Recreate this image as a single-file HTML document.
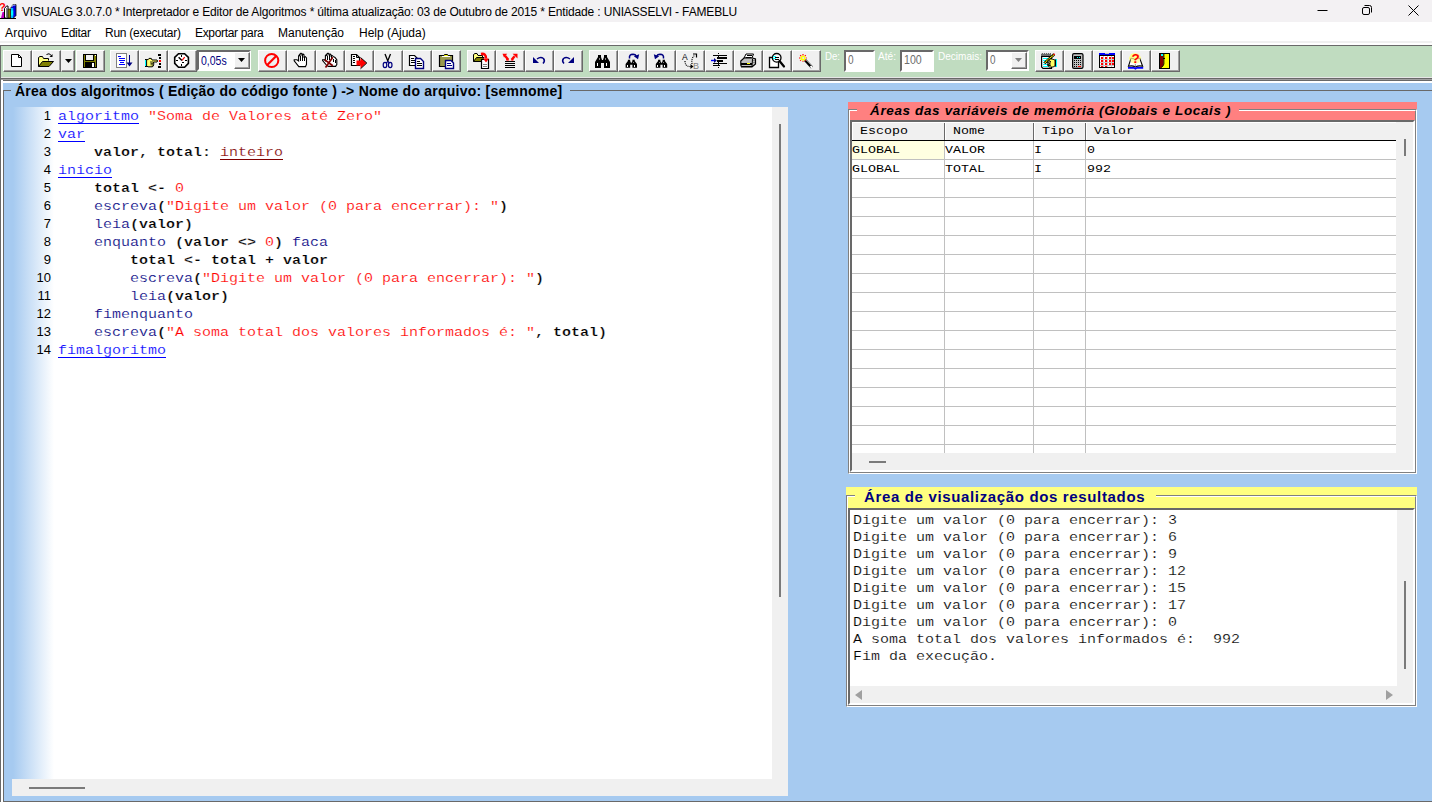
<!DOCTYPE html>
<html lang="pt-BR">
<head>
<meta charset="utf-8">
<title>VISUALG 3.0.7.0</title>
<style>
*{box-sizing:border-box;margin:0;padding:0}
html,body{width:1432px;height:802px;overflow:hidden;background:#a6caf0}
body{position:relative;font-family:"Liberation Sans",sans-serif;font-size:12px;color:#000}
.abs{position:absolute}
.t{position:absolute;white-space:pre;line-height:1}
/* title bar */
#titlebar{left:0;top:0;width:1432px;height:22px;background:#f3f1f3}
#menubar{left:0;top:22px;width:1432px;height:19px;background:#fff}
#menugap{left:0;top:41px;width:1432px;height:4px;background:#fff;border-top:2px solid #f0f0f0}
#toolbar{left:0;top:45px;width:1432px;height:32px;background:#c0dcc0;border-top:1px solid #696969;border-left:1px solid #696969}
#tbline{left:0;top:77px;width:1432px;height:4px;background:linear-gradient(#e6e6e6 0 1px,#696969 1px 2px,#a0a0a0 2px 3px,#696969 3px 4px)}
#tbwhite{left:0;top:81px;width:1432px;height:2px;background:#fff}
#main{left:0;top:83px;width:1432px;height:719px;background:#a6caf0;border-left:1px solid #696969}
#mainwhite{left:1px;top:80px;width:2px;height:722px;background:#fff}
.menu{top:27px;font-size:12px;color:#000}
.btn{position:absolute;top:50px;height:22px;width:28px;background:#f0f0f0;border:1px solid;border-color:#fff #696969 #696969 #fff;box-shadow:inset -1px -1px 0 #a0a0a0}
.btn svg{position:absolute;left:5px;top:2px;width:16px;height:16px;overflow:visible}
.btn svg rect{shape-rendering:crispEdges}

.tl{font-size:11.5px;color:#fff}
.inp{top:50px;height:22px;background:#fff;border:2px solid;border-color:#696969 #fff #fff #696969;font-size:12.5px;color:#6d6d6d;line-height:16px;padding-left:2px}
.inp span{display:inline-block;white-space:pre}
/* editor */
#gbline-l{left:3px;top:90px;width:1px;height:712px;background:#696969}
#gbline-t1{left:3px;top:90px;width:8px;height:1px;background:#696969}
#gbline-t2{left:570px;top:90px;width:862px;height:1px;background:#696969}
#gbline-b{left:3px;top:801px;width:1429px;height:1px;background:#696969}
#gbtitle{left:15px;top:84px;font-weight:bold;font-size:14px}
#editor{left:12px;top:107px;width:776px;height:689px;background:#f0f0f0}
#edwhite{left:0;top:0;width:760px;height:672px;background:#fff}
#gutter{left:0;top:0;width:42px;height:672px;background:linear-gradient(to right,#a6caf0 0,#a6caf0 1px,#fff 42px)}
.ln{position:absolute;left:0;width:39px;text-align:right;font-size:13px;line-height:18px;height:18px;color:#000}
.cl{position:absolute;left:46px;margin-top:1px;-webkit-text-stroke:0.2px #fff;font-family:"Liberation Mono",monospace;font-size:15px;line-height:18px;height:18px;white-space:pre;color:#000}
.cl .s,.cl .b,.cl .c,.cl .n,.cl .sy{display:inline-block;transform:scaleY(0.86);transform-origin:0 12.5px}
.k{color:#0000ff;display:inline-block;height:18px;background:linear-gradient(#0000ff,#0000ff) 0 15px/100% 1px no-repeat}
.ty{color:#800000;display:inline-block;height:18px;background:linear-gradient(#800000,#800000) 0 15px/100% 1px no-repeat}
.c{color:#000080}
.s{color:#ff0000}
.b{font-weight:bold;-webkit-text-stroke:0.25px #fff}
.n{color:#ff0000}

#vp{left:848px;top:102px;width:569px;height:372px;background:#ff8080}
#vp .fr{position:absolute;left:0;top:7px;width:569px;height:365px;border:1px solid;border-color:#808080 #fff #fff #808080;}
#vp .fr2{position:absolute;left:1px;top:8px;width:567px;height:363px;border:1px solid;border-color:#fff #808080 #808080 #fff;}
#vptitle{left:9px;top:2px;font-weight:bold;font-style:italic;font-size:13.5px;background:#ff8080;padding:0 8px 0 13px;height:14px;transform-origin:0 0}
#grid{left:2px;top:18px;width:565px;height:352px;background:#f0f0f0;border:2px solid;border-color:#696969 #fff #fff #696969}
#gridin{left:0;top:0;width:544px;height:331px;background:#fff;overflow:hidden}
#ghead{left:0;top:0;width:544px;height:18px;background:#f0f0f0;border-top:1px solid #fff}
#gheadline{left:0;top:18px;width:544px;height:1px;background:#000}
.hc{position:absolute;top:0;height:18px;border-left:1px solid #fff;border-right:1px solid #696969;font-family:"Liberation Mono",monospace;font-size:13.33px;line-height:15px;padding-left:7px;white-space:pre}
.hc span{display:inline-block;transform:scaleY(0.88);transform-origin:0 11px}
.gr{position:absolute;left:0;width:545px;height:1px;background:#c0c0c0}
.gc{position:absolute;top:19px;width:1px;height:312px;background:#c0c0c0}
.gt{position:absolute;transform:scaleY(0.88);transform-origin:0 12.5px;font-family:"Liberation Mono",monospace;font-size:13.33px;line-height:18px;white-space:pre}
#rp{left:846px;top:487px;width:571px;height:220px;background:#ffff80}
#rp .fr{position:absolute;left:0;top:8px;width:571px;height:212px;border:1px solid;border-color:#808080 #fff #fff #808080;}
#rp .fr2{position:absolute;left:1px;top:9px;width:569px;height:210px;border:1px solid;border-color:#fff #808080 #808080 #fff;}
#rptitle{left:9px;top:2px;font-weight:bold;font-size:15px;color:#000080;background:#ffff80;padding:0 11px 0 9px;height:18px;transform-origin:0 0}
#out{left:2px;top:21px;width:567px;height:197px;background:#f0f0f0;border:2px solid;border-color:#696969 #fff #fff #696969}
#outin{left:0;top:0;width:547px;height:176px;background:#fff}
.ol{position:absolute;left:3px;margin-top:1px;transform:scaleY(0.86);transform-origin:0 12.5px;-webkit-text-stroke:0.2px #fff;font-family:"Liberation Mono",monospace;font-size:15px;line-height:17px;height:17px;white-space:pre}

.panel{position:absolute}
</style>
</head>
<body>
<div id="titlebar" class="abs"></div>
<div id="menubar" class="abs"></div>
<div id="menugap" class="abs"></div>
<div id="toolbar" class="abs"></div>
<div id="tbline" class="abs"></div>
<div id="tbwhite" class="abs"></div>
<div id="main" class="abs"></div>
<div id="mainwhite" class="abs"></div>
<div class="abs" style="left:0;top:45px;width:1px;height:757px;background:#696969"></div>

<!-- TITLE -->
<svg class="abs" style="left:0;top:3px" width="17" height="16" viewBox="0 0 17 16">
<text x="-1" y="8" font-family="Liberation Sans,sans-serif" font-weight="bold" font-size="11" fill="#ff0000">?</text>
<path d="M1 15L2.5 9H4.5V15Z" fill="#c000c0"/><path d="M0 15.5H16" stroke="#000" stroke-width="1"/>
<path d="M4.5 15V5.5L6.5 3H8V15Z" fill="#fff" stroke="#000" stroke-width="1"/><rect x="6" y="5" width="1.5" height="10" fill="#808080"/>
<path d="M8 15V6H10.5V15Z" fill="#808000" stroke="#000" stroke-width="0.6"/>
<path d="M11 15V4.5L13 1.5H16V12.5L13.5 15Z" fill="#0000e0" stroke="#000" stroke-width="0.8"/>
<rect x="11" y="5" width="2.2" height="10" fill="#00c0ff"/><rect x="11" y="7.5" width="2.2" height="5" fill="#00ffff"/>
<path d="M11.5 4L13.2 2H15.5" stroke="#fff" stroke-width="0.8" fill="none"/>
</svg>
<div class="t" id="wtitle" style="left:22px;top:6px;font-size:12px;letter-spacing:-0.155px">VISUALG 3.0.7.0 * Interpretador e Editor de Algoritmos * última atualização: 03 de Outubro de 2015 * Entidade : UNIASSELVI - FAMEBLU</div>

<svg class="abs" style="left:1300px;top:0" width="132" height="22" viewBox="0 0 132 22" fill="none" stroke="#000" stroke-width="1">
<path d="M17.5 10.5H27.5"/>
<rect x="62.5" y="7.5" width="7" height="7" rx="1.5"/><path d="M64.5 5.5H69.5Q71.5 5.5 71.5 7.5V12.5"/>
<path d="M108.5 5.5L118.5 15.5M118.5 5.5L108.5 15.5"/>
</svg>
<!-- MENU -->
<div class="t menu" id="m1" style="left:5px;letter-spacing:0.188px">Arquivo</div>
<div class="t menu" id="m2" style="left:61px;letter-spacing:-0.277px">Editar</div>
<div class="t menu" id="m3" style="left:105px;letter-spacing:-0.263px">Run (executar)</div>
<div class="t menu" id="m4" style="left:195px;letter-spacing:-0.331px">Exportar para</div>
<div class="t menu" id="m5" style="left:278px;letter-spacing:-0.005px">Manutenção</div>
<div class="t menu" id="m6" style="left:359px;letter-spacing:-0.000px">Help (Ajuda)</div>

<!-- TOOLBAR BUTTONS -->
<div class="btn" style="left:3px;width:29px"><svg viewBox="0 0 16 16" style="left:5px"><path d="M2.5 1.5H9.5L12.5 4.5V13.5H2.5Z" fill="#fff" stroke="#000" stroke-width="1" /><path d="M9.5 1.5V4.5H12.5" fill="none" stroke="#000" stroke-width="1" /></svg></div>
<div class="btn" style="left:32px;width:29px"><svg viewBox="0 0 16 16" style="left:5px"><path d="M0.5 13.5V4.5L2 3.5H4.5L5.5 5.5H10.5V7.5" fill="#ffff80" stroke="#000" stroke-width="1" /><path d="M0.5 13.5L4.5 8.5H15.5L11 13.5Z" fill="#808000" stroke="#000" stroke-width="1" /><path d="M8.5 1.5Q11 -0.5 13.5 2.5" fill="none" stroke="#000" stroke-width="1" /><path d="M14.5 1V4H11.5Z" fill="#000" stroke="none" stroke-width="1" /></svg></div>
<div class="btn" style="left:61px;width:14px;border-left-color:#f0f0f0"><svg viewBox="0 0 7 4" style="left:3px;top:8px;width:7px;height:4px"><path d="M0 0H7L3.5 4Z" fill="#000"/></svg></div>
<div class="btn" style="left:76px;width:29px"><svg viewBox="0 0 16 16" style="left:5px"><rect x="1" y="1" width="14" height="14" fill="#000"/><rect x="2" y="2" width="12" height="12" fill="#808000"/><rect x="3" y="2" width="8" height="6" fill="#f0f0f0"/><rect x="3" y="1" width="9" height="1" fill="#000"/><rect x="3" y="7" width="9" height="1" fill="#000"/><rect x="3" y="2" width="1" height="6" fill="#000"/><rect x="11" y="2" width="1" height="6" fill="#000"/><rect x="3" y="9" width="10" height="5" fill="#000"/><rect x="10" y="10" width="2" height="4" fill="#fff"/><rect x="13" y="2" width="1" height="1" fill="#fff"/></svg></div>
<div class="btn" style="left:110px;width:29px"><svg viewBox="0 0 16 16" style="left:5px"><rect x="0" y="0" width="11" height="15" fill="#808080"/><rect x="1" y="1" width="9" height="13" fill="#fff"/><rect x="2" y="3" width="3" height="1" fill="#0000ff"/><rect x="3" y="5" width="6" height="1" fill="#0000ff"/><rect x="3" y="7" width="6" height="1" fill="#0000ff"/><rect x="4" y="9" width="4" height="1" fill="#0000ff"/><rect x="3" y="11" width="6" height="1" fill="#0000ff"/><rect x="13" y="2" width="1" height="11" fill="#000080"/><path d="M10.5 9.5H16.5L13.5 13.5Z" fill="#000080" stroke="none" stroke-width="1" /></svg></div>
<div class="btn" style="left:139px;width:29px"><svg viewBox="0 0 16 16" style="left:5px"><rect x="0" y="6" width="1.5" height="8" fill="#000"/><rect x="0" y="7" width="1.5" height="6" fill="#00ffff"/><path d="M1.6 6.6H3.2L4 5.4H6.3L7 7H12Q13.2 8 12 9H8.6V10.3H8.8V11.6H8.4V13H7.4V13.8H3L1.6 13Z" fill="#ffff70" stroke="#000" stroke-width="1" /><path d="M5 9H8.4M5.5 10.4H8.6M5.5 11.8H8.2" fill="none" stroke="#000" stroke-width="0.8" /><rect x="13" y="1" width="3" height="2" fill="#000"/><rect x="14" y="4" width="2" height="1.5" fill="#000"/><rect x="14" y="7" width="2" height="2" fill="#ff0000"/><rect x="14" y="10" width="2" height="2" fill="#000"/><rect x="13" y="13" width="3" height="2" fill="#000"/></svg></div>
<div class="btn" style="left:168px;width:29px"><svg viewBox="0 0 16 16" style="left:5px"><path d="M4.5 0.7H10.6L14.4 4.4V10.4L10.6 14.3H4.5L0.7 10.4V4.4Z" fill="#fff" stroke="#000" stroke-width="1.6" /><path d="M4.6 4.2L8 7.6" fill="none" stroke="#000" stroke-width="1.4" /><path d="M8 7.4L10.7 4.2" fill="none" stroke="#ff0000" stroke-width="1.2" /><rect x="7" y="2" width="1" height="2" fill="#000"/><rect x="7" y="11" width="1" height="2" fill="#000"/><rect x="2" y="7" width="2" height="1" fill="#000"/><rect x="11" y="7" width="2" height="1" fill="#000"/><rect x="8" y="9" width="2" height="1" fill="#000"/></svg></div>
<div class="abs" style="left:197px;top:50px;width:54px;height:21px;background:#fff;border:2px solid;border-color:#696969 #fff #fff #696969"></div>
<div class="t" id="cb1" style="left:201px;top:54px;font-size:13px;color:#000080;transform-origin:0 0;transform:scaleX(0.808)">0,05s</div>
<div class="btn" style="left:234px;top:52px;width:16px;height:17px"><svg viewBox="0 0 7 4" style="left:3px;top:5px;width:7px;height:4px"><path d="M0 0H7L3.5 4Z" fill="#000"/></svg></div>
<div class="btn" style="left:258px;width:29px"><svg viewBox="0 0 16 16" style="left:5px"><circle cx="7.7" cy="7.5" r="6.6" fill="none" stroke="#ff0000" stroke-width="2"/><path d="M3.2 12L12.2 3" fill="none" stroke="#ff0000" stroke-width="2.2" /></svg></div>
<div class="btn" style="left:287px;width:29px"><svg viewBox="0 0 16 16" style="left:5px"><path d="M5.8 13.6L1.2 7.8V6.8H4L5.6 8V3L6.3 2L7 3V1L8 0.2L9 1V1.8L10 1L11 1.8V4.2L12.3 3.6L13.5 5V11.5L12.5 13.6Z" fill="#fff" stroke="#000" stroke-width="1.1" /><rect x="7" y="3" width="1" height="5" fill="#000"/><rect x="9" y="2" width="1" height="6" fill="#000"/><rect x="11" y="4" width="1" height="4" fill="#000"/></svg></div>
<div class="btn" style="left:316px;width:29px"><svg viewBox="0 0 16 16" style="left:5px"><path d="M4.8 12.5L0.6 7.6V6.8H2.6L3.4 7.6V2.6L4.2 1.8L5 2.6V0.8L6 0.2L7 1V1.6L8 1L9 1.8V3L10.2 2.6L11.2 3.4L13 4.4L14.8 6.8V11.5L13.6 13.4H6.6Z" fill="#fff" stroke="#000" stroke-width="1.1" /><rect x="5" y="3" width="1" height="4" fill="#000"/><rect x="7" y="2" width="1" height="5" fill="#000"/><rect x="9" y="3" width="1" height="3" fill="#000"/><rect x="11" y="6" width="1" height="3" fill="#000"/><rect x="13" y="7" width="1" height="3" fill="#000"/><path d="M3.5 14.4L10.8 4.2M2.6 6.6L10.8 12.8" fill="none" stroke="#800000" stroke-width="1.7" /></svg></div>
<div class="btn" style="left:345px;width:29px"><svg viewBox="0 0 16 16" style="left:5px"><path d="M0.5 1.5H5.5L8.5 4.5V12.5H0.5Z" fill="#fff" stroke="#000" stroke-width="1.2" /><path d="M5.5 1.5V4.5H8.5" fill="none" stroke="#000" stroke-width="1" /><rect x="2" y="3" width="2" height="1" fill="#000"/><rect x="2" y="5" width="2" height="1" fill="#000"/><rect x="2" y="7" width="2" height="1" fill="#000"/><rect x="2" y="9" width="2" height="1" fill="#000"/><path d="M5.5 7.5H9.5V4.5L15.5 10L9.5 15.5V12.5H5.5Z" fill="#ff0000" stroke="none" stroke-width="1" /><path d="M9.5 4.5L15.8 10L9.5 15.8" fill="none" stroke="#000" stroke-width="1" /></svg></div>
<div class="btn" style="left:374px;width:29px"><svg viewBox="0 0 16 16" style="left:5px"><path d="M5 1L8 8.5M10.5 1L7.5 8.5" fill="none" stroke="#000" stroke-width="1.3" /><ellipse cx="5" cy="12" rx="1.8" ry="2.6" fill="none" stroke="#000080" stroke-width="1.2"/><ellipse cx="10.2" cy="12" rx="1.8" ry="2.6" fill="none" stroke="#000080" stroke-width="1.2"/><path d="M6 10L8 8.5L9.5 10" fill="none" stroke="#000080" stroke-width="1.2" /></svg></div>
<div class="btn" style="left:403px;width:29px"><svg viewBox="0 0 16 16" style="left:5px"><path d="M0.5 2.5H5.5L8.5 5.5V12.5H0.5Z" fill="#fff" stroke="#000" stroke-width="1.2" /><rect x="2" y="5" width="3" height="1" fill="#000"/><rect x="2" y="7" width="5" height="1" fill="#000"/><rect x="2" y="9" width="5" height="1" fill="#000"/><path d="M6.5 5.5H11.5L14.5 8.5V15.5H6.5Z" fill="#fff" stroke="#000080" stroke-width="1.4" /><rect x="8" y="8" width="3" height="1" fill="#000"/><rect x="8" y="10" width="5" height="1" fill="#000"/><rect x="8" y="12" width="5" height="1" fill="#000"/></svg></div>
<div class="btn" style="left:432px;width:29px"><svg viewBox="0 0 16 16" style="left:5px"><path d="M1.5 2.5H14.5V13.5H1.5Z" fill="#9a9a4d" stroke="#000" stroke-width="1.2" /><path d="M5 3.5L6.5 1.5H9.5L11 3.5Z" fill="#ffff00" stroke="#000" stroke-width="1" /><rect x="4" y="3" width="8" height="1" fill="#fff"/><path d="M7.5 7.5H13L15.5 10V15.5H7.5Z" fill="#fff" stroke="#000080" stroke-width="1.4" /><rect x="9" y="10" width="4" height="1" fill="#000080"/><rect x="9" y="12" width="5" height="1" fill="#000080"/></svg></div>
<div class="btn" style="left:467px;width:29px"><svg viewBox="0 0 16 16" style="left:5px"><path d="M0.5 8.5V1.5L2 0.5H4L5 2.5H9.5V4" fill="#ffff80" stroke="#000" stroke-width="1" /><path d="M0.5 8.5L3.5 4.5H11L8 8.5Z" fill="#808000" stroke="#000" stroke-width="1" /><path d="M8.5 6.5H15.5V15.5H8.5Z" fill="#fff" stroke="#000" stroke-width="1.2" /><rect x="10" y="11" width="4" height="1" fill="#808080"/><rect x="10" y="13" width="4" height="1" fill="#808080"/><path d="M8 1Q13 0 13 5.5" fill="none" stroke="#ff0000" stroke-width="2.6" /><path d="M10 5.5H16L13 9.5Z" fill="#ff0000" stroke="none" stroke-width="1" /></svg></div>
<div class="btn" style="left:496px;width:29px"><svg viewBox="0 0 16 16" style="left:5px"><rect x="3" y="8" width="10" height="1.2" fill="#000"/><rect x="3" y="10" width="10" height="1.2" fill="#000"/><rect x="3" y="12" width="10" height="1.2" fill="#000"/><rect x="3" y="14" width="10" height="1.2" fill="#000"/><path d="M6.3 6.8L3 2.8" fill="none" stroke="#ff0000" stroke-width="2.4" /><path d="M0.5 0.8H5.2L2 4.6Z" fill="#ff0000" stroke="none" stroke-width="1" /><path d="M4.5 4.5L7.5 7.5H4Z" fill="#ff0000" stroke="none" stroke-width="1" /><path d="M9.6 6.8L12.6 3.2" fill="none" stroke="#ff0000" stroke-width="2.4" /><path d="M10.6 0.8H15.5V5.4Z" fill="#ff0000" stroke="none" stroke-width="1" /><path d="M8.5 7.5L11.2 4.5L11.5 7.5Z" fill="#ff0000" stroke="none" stroke-width="1" /></svg></div>
<div class="btn" style="left:525px;width:29px"><svg viewBox="0 0 16 16" style="left:5px"><path d="M6 6Q9.5 3.5 12.5 5.5Q14.5 8 12 10.5" fill="none" stroke="#000080" stroke-width="1.5" /><path d="M2 4V10H8Z" fill="#000080" stroke="none" stroke-width="1" /></svg></div>
<div class="btn" style="left:554px;width:29px"><svg viewBox="0 0 16 16" style="left:5px"><path d="M10 6Q6.5 3.5 3.5 5.5Q1.5 8 4 10.5" fill="none" stroke="#000080" stroke-width="1.5" /><path d="M14 4V10H8Z" fill="#000080" stroke="none" stroke-width="1" /></svg></div>
<div class="btn" style="left:589px;width:29px"><svg viewBox="0 0 16 16" style="left:5px"><g transform="translate(0,1) scale(1)"><path d="M0 14V8L3 3V1H6V3L7 6H8L9 3V1H12V3L15 8V14H9V9H6V14Z" fill="#000" stroke="none" stroke-width="1" /><rect x="2" y="9" width="1" height="3" fill="#fff"/><rect x="11" y="9" width="1" height="3" fill="#fff"/><rect x="4" y="4" width="1" height="2" fill="#808080"/><rect x="10" y="4" width="1" height="2" fill="#808080"/></g></svg></div>
<div class="btn" style="left:618px;width:29px"><svg viewBox="0 0 16 16" style="left:5px"><g transform="translate(1.6,6) scale(0.76,0.63)"><path d="M0 14V8L3 3V1H6V3L7 6H8L9 3V1H12V3L15 8V14H9V9H6V14Z" fill="#000" stroke="none" stroke-width="1" /><rect x="2" y="9" width="1" height="3" fill="#fff"/><rect x="11" y="9" width="1" height="3" fill="#fff"/><rect x="4" y="4" width="1" height="2" fill="#808080"/><rect x="10" y="4" width="1" height="2" fill="#808080"/></g><path d="M5.5 5.5Q5 1.2 9 1.2Q11.5 1.3 12.3 3" fill="none" stroke="#000080" stroke-width="1.5" /><path d="M9.8 3.2L15.2 1.2L14 6.2Z" fill="#000080" stroke="none" stroke-width="1" /></svg></div>
<div class="btn" style="left:647px;width:29px"><svg viewBox="0 0 16 16" style="left:5px"><g transform="translate(2.8,6) scale(0.76,0.63)"><path d="M0 14V8L3 3V1H6V3L7 6H8L9 3V1H12V3L15 8V14H9V9H6V14Z" fill="#000" stroke="none" stroke-width="1" /><rect x="2" y="9" width="1" height="3" fill="#fff"/><rect x="11" y="9" width="1" height="3" fill="#fff"/><rect x="4" y="4" width="1" height="2" fill="#808080"/><rect x="10" y="4" width="1" height="2" fill="#808080"/></g><path d="M10.5 5.5Q11 1.2 7 1.2Q4.5 1.3 3.7 3" fill="none" stroke="#000080" stroke-width="1.5" /><path d="M6.2 3.2L0.8 1.2L2 6.2Z" fill="#000080" stroke="none" stroke-width="1" /></svg></div>
<div class="btn" style="left:676px;width:29px"><svg viewBox="0 0 16 16" style="left:5px"><text x="0" y="7" font-family="Liberation Sans,sans-serif" font-size="8.5" fill="#000">A</text><text x="11" y="15.5" font-family="Liberation Sans,sans-serif" font-size="9" fill="#808080">B</text><path d="M3 8Q3 14 9 13.5" fill="none" stroke="#000" stroke-width="1.2" stroke-dasharray="1 1"/><path d="M8.5 11L11.5 13.5L8.5 16Z" fill="#000" stroke="none" stroke-width="1" /><path d="M10 11Q9 5 13 2" fill="none" stroke="#000" stroke-width="1.2" stroke-dasharray="1 1"/><path d="M11 1H14.5V4.5" fill="none" stroke="#000" stroke-width="1.2" /></svg></div>
<div class="btn" style="left:705px;width:29px"><svg viewBox="0 0 16 16" style="left:5px"><rect x="2" y="2" width="14" height="1" fill="#000"/><rect x="6" y="4" width="10" height="2" fill="#000"/><rect x="6" y="7" width="6" height="2" fill="#000"/><rect x="2" y="10" width="14" height="1" fill="#000"/><rect x="2" y="12" width="7" height="1" fill="#000"/><rect x="7" y="0" width="1" height="1" fill="#000"/><rect x="7" y="3" width="1" height="1" fill="#000"/><rect x="7" y="9" width="1" height="1" fill="#000"/><rect x="7" y="11" width="1" height="1" fill="#000"/><rect x="7" y="14" width="1" height="1" fill="#000"/><path d="M0 7.5H4" fill="none" stroke="#0000ff" stroke-width="1.4" /><path d="M3 5L5.8 7.5L3 10Z" fill="#000080" stroke="none" stroke-width="1" /></svg></div>
<div class="btn" style="left:734px;width:29px"><svg viewBox="0 0 16 16" style="left:5px"><path d="M4 5L6 1H13.5L12 5Z" fill="#fff" stroke="#000" stroke-width="1" /><rect x="7" y="2" width="5" height="1" fill="#000"/><rect x="6" y="4" width="5" height="1" fill="#000"/><path d="M0.8 8L4 5H12.5L15.5 6V11L12 14H1.5L0.8 12Z" fill="#c0c0c0" stroke="#000" stroke-width="1.2" /><rect x="1" y="10" width="11" height="1.5" fill="#000"/><rect x="2" y="12.5" width="10" height="1.5" fill="#000"/><rect x="7" y="10" width="3" height="1.4" fill="#ffff00"/><path d="M12.5 6L12 14" fill="none" stroke="#000" stroke-width="1" /><rect x="13" y="7" width="2" height="1" fill="#808080"/><rect x="13" y="9" width="2" height="1" fill="#808080"/></svg></div>
<div class="btn" style="left:763px;width:29px"><svg viewBox="0 0 16 16" style="left:5px"><path d="M0.5 4.5H9.5V14.5H0.5Z" fill="#fff" stroke="#000" stroke-width="1.3" /><circle cx="7.7" cy="4.8" r="4.3" fill="#f8f8f8" stroke="#000" stroke-width="1.3"/><rect x="4" y="3" width="3" height="1" fill="#00ffff"/><rect x="4" y="5" width="3" height="1" fill="#00ffff"/><rect x="6" y="4" width="4" height="1" fill="#000"/><rect x="6" y="6" width="4" height="1" fill="#000"/><path d="M10.5 8L15 13.5" fill="none" stroke="#000" stroke-width="2.2" stroke-linecap="round"/></svg></div>
<div class="btn" style="left:792px;width:29px"><svg viewBox="0 0 16 16" style="left:5px"><path d="M7 7L14 14.5" fill="none" stroke="#000" stroke-width="2.6" /><path d="M7.5 6.5L13 12" fill="none" stroke="#808080" stroke-width="1" /><path d="M12.5 13L14.2 14.8" fill="none" stroke="#fff" stroke-width="2" /><path d="M5 1V9M1 5H9M2.2 2.2L7.8 7.8M7.8 2.2L2.2 7.8" fill="none" stroke="#ff0000" stroke-width="1.2" stroke-dasharray="1.4 1"/><circle cx="5" cy="5" r="2.6" fill="#ffff00"/><circle cx="5.2" cy="5" r="1" fill="#e0e0ff"/></svg></div>
<div class="t tl" id="tl1" style="left:825px;top:51px;transform-origin:0 0;transform:scaleX(0.838)">De:</div>
<div class="abs inp" style="left:844px;width:31px"><span id="in1" style="transform-origin:0 0;transform:scaleX(0.805)">0</span></div>
<div class="t tl" id="tl2" style="left:878px;top:51px;transform-origin:0 0;transform:scaleX(0.879)">Até:</div>
<div class="abs inp" style="left:900px;width:34px"><span id="in2" style="transform-origin:0 0;transform:scaleX(0.849)">100</span></div>
<div class="t tl" id="tl3" style="left:938px;top:51px;transform-origin:0 0;transform:scaleX(0.872)">Decimais:</div>
<div class="abs inp" style="left:986px;width:43px;height:21px"><span id="in3" style="transform-origin:0 0;transform:scaleX(0.791)">0</span></div>
<div class="btn" style="left:1011px;top:52px;width:16px;height:17px"><svg viewBox="0 0 7 4" style="left:3px;top:5px;width:7px;height:4px"><path d="M0 0H7L3.5 4Z" fill="#808080"/></svg></div>
<div class="btn" style="left:1035px;width:29px"><svg viewBox="0 0 16 16" style="left:5px"><path d="M0.6 3.5H10.5V15.4H2L0.6 14Z" fill="#fff" stroke="#000" stroke-width="1.2" /><path d="M1.2 3.4Q0.3999999999999999 1.5 1.5 0.3" fill="none" stroke="#000" stroke-width="1.1" /><path d="M3.2 3.4Q2.4000000000000004 1.5 3.5 0.3" fill="none" stroke="#000" stroke-width="1.1" /><path d="M5.2 3.4Q4.4 1.5 5.5 0.3" fill="none" stroke="#000" stroke-width="1.1" /><path d="M7.2 3.4Q6.4 1.5 7.5 0.3" fill="none" stroke="#000" stroke-width="1.1" /><path d="M9.2 3.4Q8.399999999999999 1.5 9.5 0.3" fill="none" stroke="#000" stroke-width="1.1" /><rect x="2" y="5" width="6" height="1" fill="#00ffff"/><rect x="2" y="7" width="6" height="1" fill="#00ffff"/><rect x="2" y="9" width="6" height="1" fill="#00ffff"/><rect x="2" y="11" width="6" height="1" fill="#00ffff"/><rect x="2" y="13" width="6" height="1" fill="#00ffff"/><path d="M3.4 10.2L13.2 1.2" fill="none" stroke="#000" stroke-width="2.6" /><path d="M3.8 9.8L12.8 1.6" fill="none" stroke="#ffff00" stroke-width="1.3" stroke-dasharray="1.2 0.6"/><path d="M12.6 1.8L13.6 0.8" fill="none" stroke="#ff0000" stroke-width="1.6" /><rect x="14" y="6" width="2" height="8" fill="#00ffff"/><path d="M14.5 6.5V13.5" fill="none" stroke="#000" stroke-width="1" /><path d="M8.5 6H11L14 7V13L12 14H8.5L6.5 12.5H9.5L6 11H9.5L6 9H10L8 7.5Z" fill="#ffff60" stroke="#000" stroke-width="0.9" /></svg></div>
<div class="btn" style="left:1064px;width:29px"><svg viewBox="0 0 16 16" style="left:5px"><path d="M4 0.6H11.5Q13 0.6 13 2V14Q13 15.4 11.5 15.4H4Q2.6 15.4 2.6 14V2Q2.6 0.6 4 0.6Z" fill="#c0c0c0" stroke="#000" stroke-width="1.2" /><rect x="4" y="3" width="7" height="3" fill="#000"/><rect x="7" y="4" width="1" height="1" fill="#00ffff"/><rect x="9" y="4" width="1" height="1" fill="#00ffff"/><rect x="4" y="7" width="1" height="1" fill="#000"/><rect x="6" y="7" width="1" height="1" fill="#000"/><rect x="8" y="7" width="1" height="1" fill="#000"/><rect x="10" y="7" width="1" height="1" fill="#000"/><rect x="4" y="9" width="1" height="1" fill="#000"/><rect x="6" y="9" width="1" height="1" fill="#000"/><rect x="8" y="9" width="1" height="1" fill="#000"/><rect x="10" y="9" width="1" height="1" fill="#000"/><rect x="4" y="11" width="1" height="1" fill="#000"/><rect x="6" y="11" width="1" height="1" fill="#000"/><rect x="8" y="11" width="1" height="1" fill="#000"/><rect x="10" y="11" width="1" height="1" fill="#000"/><rect x="4" y="13" width="1" height="1" fill="#000"/><rect x="6" y="13" width="1" height="1" fill="#000"/><rect x="8" y="13" width="1" height="1" fill="#000"/><rect x="10" y="13" width="1" height="1" fill="#000"/><rect x="8" y="13" width="3" height="1" fill="#ff0000"/></svg></div>
<div class="btn" style="left:1093px;width:29px"><svg viewBox="0 0 16 16" style="left:5px"><rect x="0" y="0" width="16" height="15" fill="#000"/><rect x="0" y="0" width="16" height="2" fill="#0000ff"/><rect x="6" y="0" width="4" height="1" fill="#c0c0c0"/><rect x="1" y="3" width="14" height="11" fill="#fff"/><rect x="4" y="3" width="1" height="11" fill="#c8c8c8"/><rect x="8" y="3" width="1" height="11" fill="#c8c8c8"/><rect x="12" y="3" width="1" height="11" fill="#c8c8c8"/><rect x="1" y="6" width="14" height="1" fill="#c8c8c8"/><rect x="1" y="9" width="14" height="1" fill="#c8c8c8"/><rect x="1" y="12" width="14" height="1" fill="#c8c8c8"/><rect x="2" y="4" width="2" height="2" fill="#ff0000"/><rect x="6" y="4" width="2" height="2" fill="#ff0000"/><rect x="10" y="4" width="2" height="2" fill="#ff0000"/><rect x="13" y="4" width="2" height="2" fill="#ff0000"/><rect x="2" y="7" width="2" height="2" fill="#ff0000"/><rect x="6" y="7" width="2" height="2" fill="#ff0000"/><rect x="10" y="7" width="2" height="2" fill="#ff0000"/><rect x="13" y="7" width="2" height="2" fill="#ff0000"/><rect x="2" y="10" width="2" height="2" fill="#ff0000"/><rect x="6" y="10" width="2" height="2" fill="#ff0000"/><rect x="10" y="10" width="2" height="2" fill="#ff0000"/><rect x="13" y="10" width="2" height="2" fill="#ff0000"/><rect x="2" y="13" width="2" height="1" fill="#ff0000"/><rect x="6" y="13" width="2" height="1" fill="#ff0000"/></svg></div>
<div class="btn" style="left:1122px;width:29px"><svg viewBox="0 0 16 16" style="left:5px"><path d="M7 0L11 1L13.2 5L11.5 10L7 11.5L2.5 10L0.8 5L3 1Z" fill="#ffff90" stroke="none" stroke-width="1" /><path d="M0.5 13.2L3 5.4Q5.5 5 7.3 7Q9 5 11.8 5.4L14.6 13.2Q10.5 12.2 7.4 14Q4.5 12.2 0.5 13.2Z" fill="#fff" stroke="#000" stroke-width="1.1" /><path d="M7 0.5L10.5 1.5L12.5 5L11.5 9.5L7.3 11L3 9.5L2 5L3.8 1.5Z" fill="#ffff90" stroke="none" stroke-width="0" opacity="0.75"/><path d="M7.3 11V13.6" fill="none" stroke="#808080" stroke-width="0.8" /><path d="M0 14.9H6L7.4 15.8L9 14.9H15.2" fill="none" stroke="#0000ff" stroke-width="1.6" /><text x="3.4" y="10.2" font-family="Liberation Sans,sans-serif" font-weight="bold" font-size="13.5" fill="#ff0000">?</text></svg></div>
<div class="btn" style="left:1151px;width:29px"><svg viewBox="0 0 16 16" style="left:5px"><rect x="2" y="0" width="11" height="16" fill="#000"/><rect x="3" y="1" width="9" height="14" fill="#ffff00"/><path d="M3 1H6.6V11Q6.5 13 3.6 15H3Z" fill="#800000" stroke="none" stroke-width="1" /><path d="M6.9 1V11Q6.6 13.3 3.6 15" fill="none" stroke="#000" stroke-width="0.9" /><rect x="4" y="1" width="2" height="1.6" fill="#00ffff"/><rect x="6" y="5" width="2" height="1" fill="#000"/><rect x="6.6" y="5.2" width="0.8" height="0.6" fill="#ffff00"/></svg></div>

<!-- EDITOR GROUP -->
<div class="abs" id="gbline-l"></div>
<div class="abs" id="gbline-t1"></div>
<div class="abs" id="gbline-t2"></div>
<div class="abs" id="gbline-b"></div>
<div class="t" id="gbtitle" style="letter-spacing:0.238px">Área dos algoritmos ( Edição do código fonte ) -&gt; Nome do arquivo: [semnome]</div>

<div class="abs" id="editor">
  <div class="abs" id="edwhite"></div>
  <div class="abs" id="gutter"></div>
  <div class="ln" style="top:0px">1</div><div class="cl" style="top:0px"><span class="k"><span class="sy">algoritmo</span></span> <span class="s">"Soma de Valores até Zero"</span></div>
  <div class="ln" style="top:18px">2</div><div class="cl" style="top:18px"><span class="k"><span class="sy">var</span></span></div>
  <div class="ln" style="top:36px">3</div><div class="cl" style="top:36px">    <span class="b">valor, total: </span><span class="ty"><span class="sy">inteiro</span></span></div>
  <div class="ln" style="top:54px">4</div><div class="cl" style="top:54px"><span class="k"><span class="sy">inicio</span></span></div>
  <div class="ln" style="top:72px">5</div><div class="cl" style="top:72px">    <span class="b">total &lt;- </span><span class="n">0</span></div>
  <div class="ln" style="top:90px">6</div><div class="cl" style="top:90px">    <span class="c">escreva</span><span class="b">(</span><span class="s">"Digite um valor (0 para encerrar): "</span><span class="b">)</span></div>
  <div class="ln" style="top:108px">7</div><div class="cl" style="top:108px">    <span class="c">leia</span><span class="b">(valor)</span></div>
  <div class="ln" style="top:126px">8</div><div class="cl" style="top:126px">    <span class="c">enquanto</span> <span class="b">(valor &lt;&gt; </span><span class="n">0</span><span class="b">)</span> <span class="c">faca</span></div>
  <div class="ln" style="top:144px">9</div><div class="cl" style="top:144px">        <span class="b">total &lt;- total + valor</span></div>
  <div class="ln" style="top:162px">10</div><div class="cl" style="top:162px">        <span class="c">escreva</span><span class="b">(</span><span class="s">"Digite um valor (0 para encerrar): "</span><span class="b">)</span></div>
  <div class="ln" style="top:180px">11</div><div class="cl" style="top:180px">        <span class="c">leia</span><span class="b">(valor)</span></div>
  <div class="ln" style="top:198px">12</div><div class="cl" style="top:198px">    <span class="c">fimenquanto</span></div>
  <div class="ln" style="top:216px">13</div><div class="cl" style="top:216px">    <span class="c">escreva</span><span class="b">(</span><span class="s">"A soma total dos valores informados é: "</span><span class="b">, total)</span></div>
  <div class="ln" style="top:234px">14</div><div class="cl" style="top:234px"><span class="k"><span class="sy">fimalgoritmo</span></span></div>
  <div class="abs" style="left:767px;top:17px;width:2px;height:473px;background:#7a7a7a"></div>
  <div class="abs" style="left:17px;top:680px;width:56px;height:2px;background:#7a7a7a"></div>
</div>


<div class="panel" id="vp">
  <div class="fr"></div><div class="fr2"></div>
  <div class="t" id="vptitle" style="letter-spacing:0.634px">Áreas das variáveis de memória (Globais e Locais )</div>
  <div class="abs" id="grid">
    <div class="abs" id="gridin">
      <div class="abs" style="left:0;top:19px;width:92px;height:18px;background:#ffffe1"></div>
      <div class="gr" style="top:37px"></div><div class="gr" style="top:56px"></div><div class="gr" style="top:75px"></div><div class="gr" style="top:94px"></div><div class="gr" style="top:113px"></div><div class="gr" style="top:132px"></div><div class="gr" style="top:151px"></div><div class="gr" style="top:170px"></div><div class="gr" style="top:189px"></div><div class="gr" style="top:208px"></div><div class="gr" style="top:227px"></div><div class="gr" style="top:246px"></div><div class="gr" style="top:265px"></div><div class="gr" style="top:284px"></div><div class="gr" style="top:303px"></div><div class="gr" style="top:322px"></div>
      <div class="gc" style="left:92px"></div><div class="gc" style="left:181px"></div><div class="gc" style="left:233px"></div>
      <div class="abs" id="ghead">
        <div class="hc" style="left:0;width:93px"><span>Escopo</span></div>
        <div class="hc" style="left:93px;width:89px"><span>Nome</span></div>
        <div class="hc" style="left:182px;width:52px"><span>Tipo</span></div>
        <div class="hc" style="left:234px;width:310px;border-right:none"><span>Valor</span></div>
      </div>
      <div class="abs" id="gheadline"></div>
      <div class="gt" style="left:0;top:19px">GLOBAL</div><div class="gt" style="left:93px;top:19px">VALOR</div><div class="gt" style="left:182px;top:19px">I</div><div class="gt" style="left:235px;top:19px">0</div>
      <div class="gt" style="left:0;top:38px">GLOBAL</div><div class="gt" style="left:93px;top:38px">TOTAL</div><div class="gt" style="left:182px;top:38px">I</div><div class="gt" style="left:235px;top:38px">992</div>
    </div>
    <div class="abs" style="left:552px;top:17px;width:2px;height:17px;background:#7a7a7a"></div>
    <div class="abs" style="left:17px;top:339px;width:17px;height:2px;background:#7a7a7a"></div>
  </div>
</div>

<div class="panel" id="rp">
  <div class="fr"></div><div class="fr2"></div>
  <div class="t" id="rptitle" style="letter-spacing:0.650px">Área de visualização dos resultados</div>
  <div class="abs" id="out">
    <div class="abs" id="outin">
      <div class="ol" style="top:1px">Digite um valor (0 para encerrar): 3</div>
      <div class="ol" style="top:18px">Digite um valor (0 para encerrar): 6</div>
      <div class="ol" style="top:35px">Digite um valor (0 para encerrar): 9</div>
      <div class="ol" style="top:52px">Digite um valor (0 para encerrar): 12</div>
      <div class="ol" style="top:69px">Digite um valor (0 para encerrar): 15</div>
      <div class="ol" style="top:86px">Digite um valor (0 para encerrar): 17</div>
      <div class="ol" style="top:103px">Digite um valor (0 para encerrar): 0</div>
      <div class="ol" style="top:120px">A soma total dos valores informados é:  992</div>
      <div class="ol" style="top:137px">Fim da execução.</div>
    </div>
    <div class="abs" style="left:554px;top:71px;width:2px;height:88px;background:#7a7a7a"></div>
    <svg class="abs" style="left:5px;top:180px" width="8" height="10" viewBox="0 0 8 10"><path d="M7 0 L7 10 L0 5 Z" fill="#a0a0a0"/></svg>
    <svg class="abs" style="left:535px;top:180px" width="8" height="10" viewBox="0 0 8 10"><path d="M1 0 L1 10 L8 5 Z" fill="#a0a0a0"/></svg>
  </div>
</div>

</body>
</html>
